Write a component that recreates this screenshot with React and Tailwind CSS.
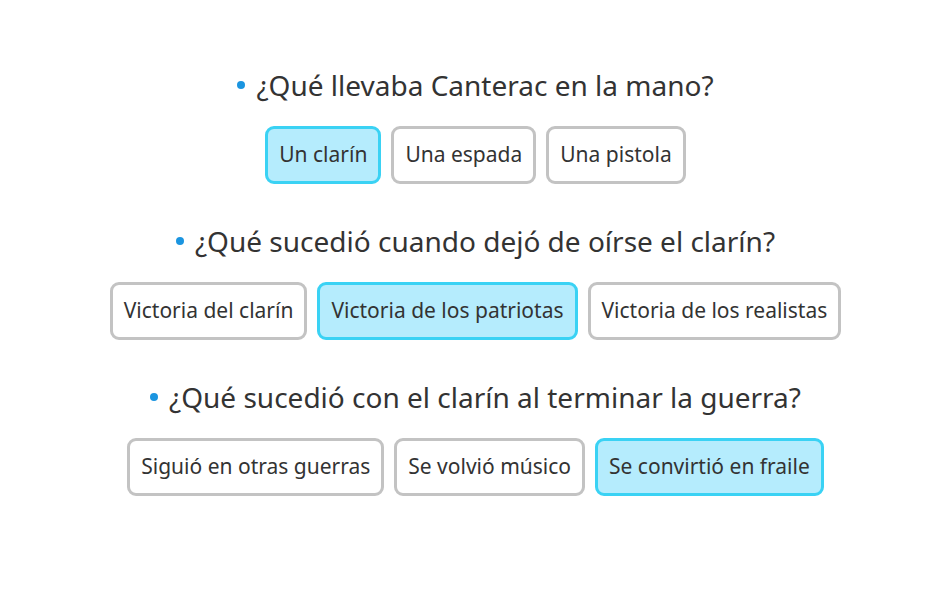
import React from "react";

const questions = [
  {
    q: "¿Qué llevaba Canterac en la mano?",
    options: ["Un clarín", "Una espada", "Una pistola"],
    selected: 0,
  },
  {
    q: "¿Qué sucedió cuando dejó de oírse el clarín?",
    options: ["Victoria del clarín", "Victoria de los patriotas", "Victoria de los realistas"],
    selected: 1,
  },
  {
    q: "¿Qué sucedió con el clarín al terminar la guerra?",
    options: ["Siguió en otras guerras", "Se volvió músico", "Se convirtió en fraile"],
    selected: 2,
  },
];

const App = () => {
  return (
    <div
      className="w-[938px] h-[599px] bg-white text-[#333] flex flex-col items-center pt-[66px] pl-[13px]"
      style={{ fontFamily: '"Noto Sans", sans-serif' }}
    >
      {questions.map((item, i) => (
        <div key={i} className="flex flex-col items-center mb-[38px]">
          {/* question */}
          <div className="flex items-center gap-[11px] text-[28px] leading-[38px]">
            <span className="w-[8px] h-[8px] rounded-full bg-[#1b95e0]"></span>
            <span>{item.q}</span>
          </div>
          {/* answers */}
          <div className="flex gap-[10px] mt-[22px]">
            {item.options.map((opt, j) => (
              <button
                key={j}
                className={
                  "h-[58px] px-[11px] rounded-[9px] border-[3px] text-[21px] text-[#333] " +
                  (j === item.selected
                    ? "bg-[#b5ecfd] border-[#3ad2f4]"
                    : "bg-white border-[#c3c3c3]")
                }
              >
                {opt}
              </button>
            ))}
          </div>
        </div>
      ))}
    </div>
  );
};

export default App;
